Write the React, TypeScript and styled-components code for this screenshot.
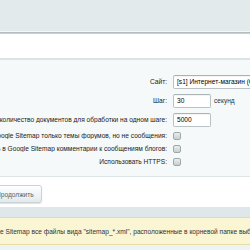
import styled, { createGlobalStyle } from "styled-components";

const GlobalStyle = createGlobalStyle`
  html, body {
    margin: 0;
    padding: 0;
    background: #eef3f4;
    overflow: hidden;
  }
  body {
    font-family: "Liberation Sans", Arial, sans-serif;
    font-size: 6.6px;
    color: #000;
  }
`;

const Page = styled.div`
  width: 250px;
  height: 250px;
  display: flex;
  flex-direction: column;
  overflow: hidden;
`;

const TopBar = styled.div`
  height: 31px;
  flex: none;
  background: #e2eaec;
  border-bottom: 1px solid #f4f7f8;
  box-shadow: 0 1px 0 #b3bcbe, 0 2px 0 #c9d0d2;
`;

const TabStrip = styled.div`
  height: 24px;
  flex: none;
  margin-top: 2px;
  background: #fff;
  border-bottom: 2px solid #dde3e5;
`;

const Form = styled.div`
  flex: none;
  background: #f5f9f9;
  padding: 12px 0 8px;
  border-bottom: 1px solid #dfe5e7;
  display: flex;
  flex-direction: column;
`;

const Row = styled.div<{ $h: number }>`
  display: flex;
  align-items: center;
  height: ${({ $h }) => $h}px;
`;

const Label = styled.div`
  width: 170px;
  flex: none;
  display: flex;
  justify-content: flex-end;
  overflow: hidden;
  white-space: nowrap;
  color: #222;
  padding-right: 3px;
  box-sizing: border-box;
`;

const Field = styled.div`
  display: flex;
  align-items: center;
  gap: 3px;
  padding-left: 3px;
  white-space: nowrap;
`;

const Input = styled.div<{ $w: number }>`
  width: ${({ $w }) => $w}px;
  height: 14px;
  flex: none;
  box-sizing: border-box;
  border: 1px solid #b9c3c6;
  border-top-color: #a9b3b6;
  border-radius: 2px;
  background: #fff;
  padding: 0 3px;
  display: flex;
  align-items: center;
  color: #000;
  overflow: hidden;
  white-space: nowrap;
  box-shadow: inset 0 1px 1px rgba(0, 0, 0, 0.05);
`;

const Unit = styled.span`
  color: #333;
`;

const Check = styled.div`
  width: 8px;
  height: 8px;
  box-sizing: border-box;
  border: 1px solid #9ea8ab;
  border-radius: 2px;
  background: linear-gradient(#e9edee, #c8cfd1);
`;

const Footer = styled.div`
  flex: none;
  height: 30px;
  box-sizing: border-box;
  padding-top: 8px;
  background: #fff;
  display: flex;
  align-items: flex-start;
`;

const Button = styled.div`
  margin-left: -16px;
  height: 18px;
  padding: 0 7px 0 11px;
  box-sizing: border-box;
  display: flex;
  align-items: center;
  border: 1px solid #c9d2d4;
  border-radius: 3px;
  background: linear-gradient(#ffffff, #e3eaec);
  box-shadow: 0 1px 1px rgba(0, 0, 0, 0.12);
  color: #56666a;
  white-space: nowrap;
`;

const Band = styled.div`
  flex: none;
  height: 10px;
  background: #dfe7ea;
`;

const Note = styled.div`
  flex: none;
  height: 28px;
  box-sizing: border-box;
  background: #faf5d3;
  border-top: 1px solid #e5dca8;
  border-bottom: 1px solid #e5dca8;
  display: flex;
  align-items: center;
  overflow: hidden;
  white-space: nowrap;
  color: #333;
`;

/* the part of the sentence that lies left of the visible area */
const NoteLead = styled.span`
  width: 0;
  flex: none;
  display: flex;
  justify-content: flex-end;
`;

export default function App() {
  return (
    <>
      <GlobalStyle />
      <Page>
        <TopBar />
        <TabStrip />
        <Form>
          <Row $h={19}>
            <Label>Сайт:</Label>
            <Field>
              <Input $w={90}>[s1] Интернет-магазин (Сайт по умолчанию)</Input>
            </Field>
          </Row>
          <Row $h={19}>
            <Label>Шаг:</Label>
            <Field>
              <Input $w={38}>30</Input>
              <Unit>секунд</Unit>
            </Field>
          </Row>
          <Row $h={19}>
            <Label>Максимальное количество документов для обработки на одном шаге:</Label>
            <Field>
              <Input $w={38}>5000</Input>
            </Field>
          </Row>
          <Row $h={13}>
            <Label>Включать в Google Sitemap только темы форумов, но не сообщения:</Label>
            <Field>
              <Check />
            </Field>
          </Row>
          <Row $h={13}>
            <Label>Включать в Google Sitemap комментарии к сообщениям блогов:</Label>
            <Field>
              <Check />
            </Field>
          </Row>
          <Row $h={13}>
            <Label>Использовать HTTPS:</Label>
            <Field>
              <Check />
            </Field>
          </Row>
        </Form>
        <Footer>
          <Button>Продолжить</Button>
        </Footer>
        <Band />
        <Note>
          <NoteLead>Будут удалены из индекса Googl</NoteLead>
          <span>e Sitemap все файлы вида "sitemap_*.xml", расположенные в корневой папке выбранного сайта</span>
        </Note>
      </Page>
    </>
  );
}
